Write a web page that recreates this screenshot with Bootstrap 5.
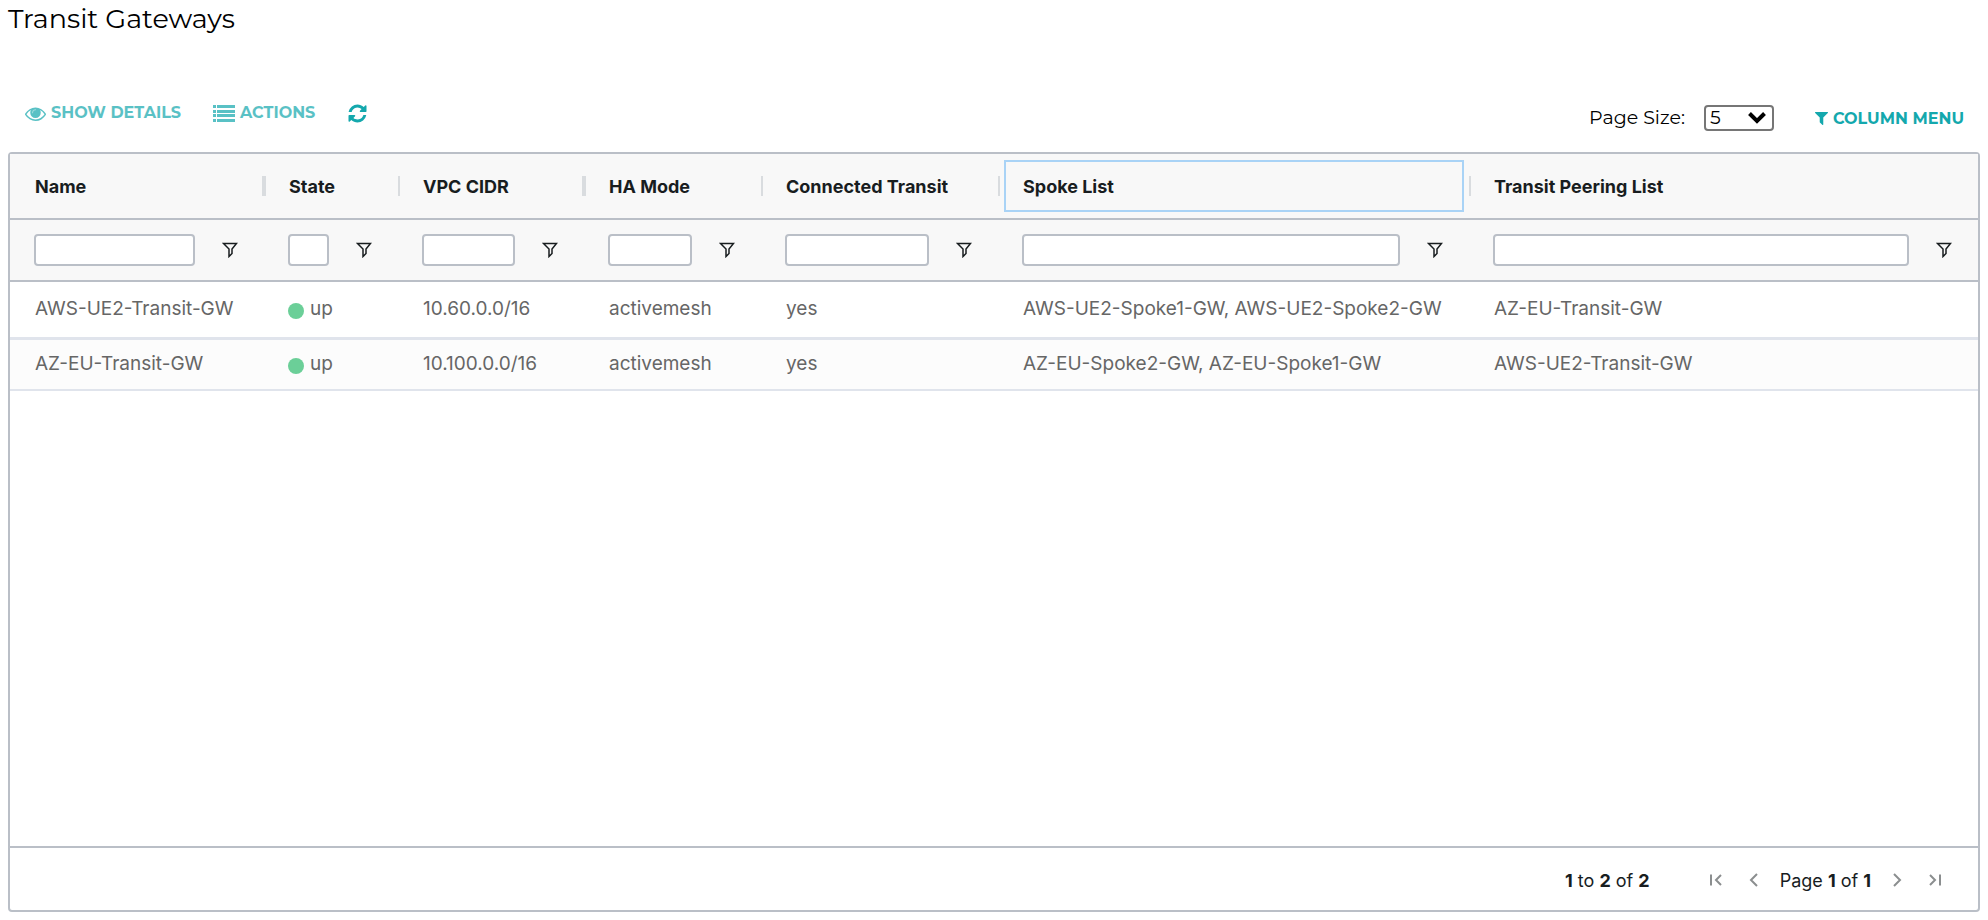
<!DOCTYPE html>
<html lang="en">
<head>
<meta charset="utf-8">
<meta name="viewport" content="width=device-width, initial-scale=1">
<title>Transit Gateways</title>
<link href="https://cdn.jsdelivr.net/npm/bootstrap@5.3.0/dist/css/bootstrap.min.css" rel="stylesheet">
<style>
  body { font-family: Inter, "Liberation Sans", sans-serif; color: #181d1f; background: #fff; }
  .page { padding: 0 8px 8px; }
  .page-title, .toolbar { font-family: Montserrat, Inter, sans-serif; }
  .page-title { font-size: 27px; line-height: 38px; font-weight: 400; color: #000; }
  .toolbar { height: 70px; margin-top: 44px; padding: 0 16px 0 17px; }
  .tool-btn { display: inline-flex; align-items: center; gap: 5px; padding: 0; border: 0; font-size: 16px; line-height: 24px; font-weight: 700; color: #14a8ad; background: none; }
  .tool-btn.muted { opacity: .7; }
  .tool-btn svg { fill: currentColor; }
  .tool-left { gap: 32px; padding-top: 19px; }
  .tool-right { padding-top: 24px; height: 48px; }
  .column-btn { margin-left: 41px; padding-top: 1px; }
  .page-size { margin-right: 19px; font-size: 19px; line-height: 26px; font-weight: 400; color: #000; }
  .size-select { width: 70px; height: 26px; padding: 0 24px 0 4px; border: 2px solid #767676; border-radius: 4px; font-size: 19px; line-height: 22px; font-weight: 400; color: #000;
    --bs-form-select-bg-img: url("data:image/svg+xml,%3csvg xmlns='http://www.w3.org/2000/svg' viewBox='0 0 18 12'%3e%3cpath fill='none' stroke='black' stroke-width='4' d='M1.500 1.500l7.500 7.500 7.500-7.500'/%3e%3c/svg%3e");
    background-position: right 6px center; background-size: 18px 12px; }
  .grid { border: 2px solid #babfc7; border-radius: 4px; }
  .grid-table { table-layout: fixed; width: 100%; border-collapse: separate; border-spacing: 0; }
  .grid-table th, .grid-table td { padding: 0 20px 0 25px; white-space: nowrap; text-align: left; }
  .grid-table thead th, .grid-table thead td { background: #f8f8f8; border-bottom: 2px solid #babfc7; }
  .grid-table thead th { position: relative; height: 66px; font-size: 18px; font-weight: 700; }
  .grid-table thead th + th::before { content: ""; position: absolute; left: 0; top: 22px; width: 2px; height: 20px; background: #d9dcdf; }
  .grid-table thead th.wide-grip::before { left: -2px; width: 4px; }
  .grid-table thead th.focused::after { content: ""; position: absolute; inset: 6px 5px 6px 6px; border: 2px solid #a9d3f6; }
  .grid-table thead td { height: 62px; padding-left: 24px; padding-right: 26px; }
  .filter-input { min-width: 0; height: 32px; border: 2px solid #babfc7; border-radius: 4px; padding: 0 6px; background: #fff; }
  .filter-btn { margin-left: 27px; padding: 0; border: 0; background: none; line-height: 0; color: #181d1f; }
  .grid-table tbody td { height: 58px; padding-bottom: 1px; font-size: 19px; color: #666; border-bottom: 3px solid #e0e4ec; }
  .grid-table tbody tr:last-child td { height: 51px; background: #fcfcfc; border-bottom-width: 2px; }
  .dot { width: 16px; height: 16px; border-radius: 50%; background: #6bcf98; margin-right: 6px; margin-top: 3px; }
  .state { margin-left: -1px; }
  .pager { height: 64px; border-top: 2px solid #babfc7; font-size: 18px; padding: 2px 35px 0 0; }
  .pager-count { margin-right: 58px; }
  .pager-nav { gap: 18px; }
  .pager-pair { gap: 22px; }
  .pager-btn { padding: 0; border: 0; background: none; line-height: 0; color: #8b8e8f; }
  .pager-btn svg, .filter-btn svg { fill: none; stroke: currentColor; }
</style>
</head>
<body>
<svg class="d-none" aria-hidden="true">
  <symbol id="funnel" viewBox="0 0 16 16"><path stroke-width="1.500" d="M1.500 1.500h13L10 7v4.500L7 14.500V7z"/></symbol>
</svg>
<main class="page min-vh-100 d-flex flex-column">
  <h1 class="page-title m-0">Transit Gateways</h1>
  <div class="toolbar d-flex justify-content-between align-items-start">
    <div class="tool-left d-flex align-items-center">
      <button type="button" class="tool-btn muted"><svg width="21" height="21" viewBox="0 0 1792 1792"><path d="M1664 960q-152-236-381-353 61 104 61 225 0 185-131.500 316.500t-316.500 131.500-316.500-131.500-131.500-316.500q0-121 61-225-229 117-381 353 133 205 333.500 326.500t434.500 121.500 434.500-121.500 333.500-326.500zm-720-384q0-20-14-34t-34-14q-125 0-214.500 89.500t-89.500 214.500q0 20 14 34t34 14 34-14 14-34q0-86 61-147t147-61q20 0 34-14t14-34zm848 384q0 34-20 69-140 230-376.500 368.500t-499.500 138.500-499.500-139-376.500-368q-20-35-20-69t20-69q140-229 376.500-368t499.500-139 499.500 139 376.500 368q20 35 20 69z"/><circle cx="896" cy="820" r="330" opacity=".6"/></svg>SHOW DETAILS</button>
      <button type="button" class="tool-btn muted"><svg width="22" height="17" viewBox="0 0 22 17"><path d="M0 0h3v3H0zM4 0h18v3H4zM0 5h3v3H0zM4 5h18v3H4zM0 9h3v3H0zM4 9h18v3H4zM0 14h3v3H0zM4 14h18v3H4z"/></svg>ACTIONS</button>
      <button type="button" class="tool-btn" aria-label="Refresh"><svg width="21" height="21" viewBox="0 0 1792 1792"><path d="M1639 1056q0 5-1 7-64 268-268 434.500t-478 166.500q-146 0-282.500-55t-243.500-157l-129 129q-19 19-45 19t-45-19-19-45v-448q0-26 19-45t45-19h448q26 0 45 19t19 45-19 45l-137 137q71 66 161 102t187 36q134 0 250-65t186-179q11-17 53-117 8-23 30-23h192q13 0 22.500 9.500t9.500 22.500zm25-800v448q0 26-19 45t-45 19h-448q-26 0-45-19t-19-45 19-45l138-138q-148-137-349-137-134 0-250 65t-186 179q-11 17-53 117-8 23-30 23h-199q-13 0-22.500-9.500t-9.500-22.500v-7q65-268 270-434.500t480-166.500q146 0 284 55.500t245 156.500l130-129q19-19 45-19t45 19 19 45z"/></svg></button>
    </div>
    <div class="tool-right d-flex align-items-center">
      <label class="page-size" for="pageSize">Page Size:</label>
      <select id="pageSize" class="form-select size-select"><option>5</option><option>10</option><option>25</option></select>
      <button type="button" class="tool-btn column-btn"><svg width="13" height="13" viewBox="192 256 1408 1408"><path d="M1595 295q17 41-14 70l-493 493v742q0 42-39 59-13 5-25 5-27 0-45-19l-256-256q-19-19-19-45v-486l-493-493q-31-29-14-70 17-39 59-39h1280q42 0 59 39z"/></svg>COLUMN MENU</button>
    </div>
  </div>
  <section class="grid flex-grow-1 d-flex flex-column">
    <table class="grid-table">
      <colgroup><col style="width:254px"><col style="width:134px"><col style="width:186px"><col style="width:177px"><col style="width:237px"><col style="width:471px"><col></colgroup>
      <thead>
        <tr><th>Name</th><th class="wide-grip">State</th><th>VPC CIDR</th><th class="wide-grip">HA Mode</th><th>Connected Transit</th><th class="focused">Spoke List</th><th>Transit Peering List</th></tr>
        <tr>
          <td><div class="d-flex align-items-center"><input class="filter-input flex-fill" type="text" aria-label="Filter Name"><button type="button" class="filter-btn" aria-label="Name filter menu"><svg width="16" height="16"><use href="#funnel"/></svg></button></div></td>
          <td><div class="d-flex align-items-center"><input class="filter-input flex-fill" type="text" aria-label="Filter State"><button type="button" class="filter-btn" aria-label="State filter menu"><svg width="16" height="16"><use href="#funnel"/></svg></button></div></td>
          <td><div class="d-flex align-items-center"><input class="filter-input flex-fill" type="text" aria-label="Filter VPC CIDR"><button type="button" class="filter-btn" aria-label="VPC CIDR filter menu"><svg width="16" height="16"><use href="#funnel"/></svg></button></div></td>
          <td><div class="d-flex align-items-center"><input class="filter-input flex-fill" type="text" aria-label="Filter HA Mode"><button type="button" class="filter-btn" aria-label="HA Mode filter menu"><svg width="16" height="16"><use href="#funnel"/></svg></button></div></td>
          <td><div class="d-flex align-items-center"><input class="filter-input flex-fill" type="text" aria-label="Filter Connected Transit"><button type="button" class="filter-btn" aria-label="Connected Transit filter menu"><svg width="16" height="16"><use href="#funnel"/></svg></button></div></td>
          <td><div class="d-flex align-items-center"><input class="filter-input flex-fill" type="text" aria-label="Filter Spoke List"><button type="button" class="filter-btn" aria-label="Spoke List filter menu"><svg width="16" height="16"><use href="#funnel"/></svg></button></div></td>
          <td><div class="d-flex align-items-center"><input class="filter-input flex-fill" type="text" aria-label="Filter Transit Peering List"><button type="button" class="filter-btn" aria-label="Transit Peering List filter menu"><svg width="16" height="16"><use href="#funnel"/></svg></button></div></td>
        </tr>
      </thead>
      <tbody>
        <tr><td>AWS-UE2-Transit-GW</td><td><div class="state d-flex align-items-center"><span class="dot"></span>up</div></td><td>10.60.0.0/16</td><td>activemesh</td><td>yes</td><td>AWS-UE2-Spoke1-GW, AWS-UE2-Spoke2-GW</td><td>AZ-EU-Transit-GW</td></tr>
        <tr><td>AZ-EU-Transit-GW</td><td><div class="state d-flex align-items-center"><span class="dot"></span>up</div></td><td>10.100.0.0/16</td><td>activemesh</td><td>yes</td><td>AZ-EU-Spoke2-GW, AZ-EU-Spoke1-GW</td><td>AWS-UE2-Transit-GW</td></tr>
      </tbody>
    </table>
    <div class="pager mt-auto d-flex justify-content-end align-items-center">
      <div class="pager-count"><b>1</b> to <b>2</b> of <b>2</b></div>
      <nav class="pager-nav d-flex align-items-center" aria-label="Pages">
        <div class="pager-pair d-flex">
          <button type="button" class="pager-btn" aria-label="First page"><svg width="16" height="16"><path stroke-width="2" d="M3 2.500v11M13 3L8 8l5 5"/></svg></button>
          <button type="button" class="pager-btn" aria-label="Previous page"><svg width="16" height="16"><path stroke-width="2" d="M11 2L5 8l6 6"/></svg></button>
        </div>
        <span>Page <b>1</b> of <b>1</b></span>
        <div class="pager-pair d-flex">
          <button type="button" class="pager-btn" aria-label="Next page"><svg width="16" height="16"><path stroke-width="2" d="M5 2l6 6-6 6"/></svg></button>
          <button type="button" class="pager-btn" aria-label="Last page"><svg width="16" height="16"><path stroke-width="2" d="M13 2.500v11M3 3l5 5-5 5"/></svg></button>
        </div>
      </nav>
    </div>
  </section>
</main>
<script src="https://cdn.jsdelivr.net/npm/bootstrap@5.3.0/dist/js/bootstrap.bundle.min.js"></script>
</body>
</html>
